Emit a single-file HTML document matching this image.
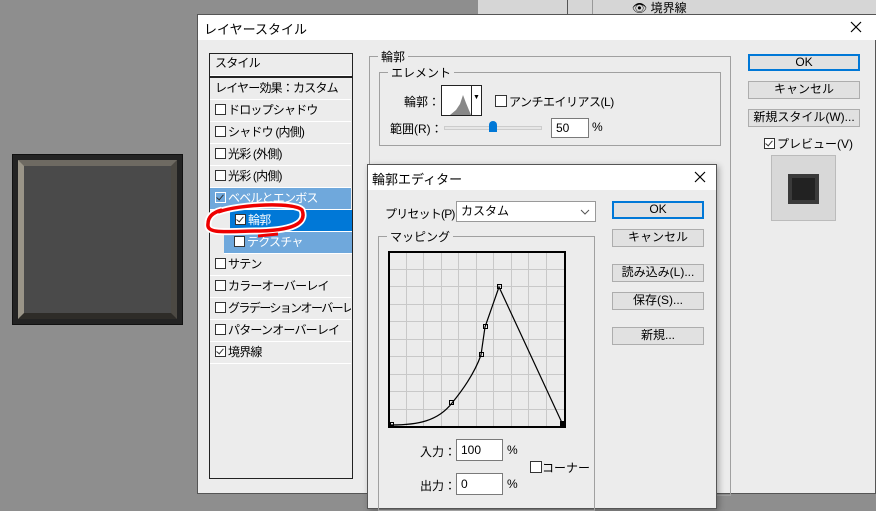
<!DOCTYPE html>
<html><head><meta charset="utf-8"><style>
*{box-sizing:border-box;margin:0;padding:0}
body{width:876px;height:507px;overflow:hidden;position:relative;background:#8e8e8e;font-family:"Liberation Sans","Noto Sans CJK JP",sans-serif;font-size:12px;color:#000}
.a{position:absolute;white-space:nowrap}
.btn{position:absolute;background:#e1e1e1;border:1px solid #adadad;text-align:center;font-size:12px;line-height:15px;white-space:nowrap}
.btn.def{border:2px solid #0078d7;line-height:13px}
.cb{display:inline-block;width:11px;height:11px;border:1px solid #333;background:#fff;vertical-align:-1px;margin-right:2px;position:relative}
.cb.on::after{content:"";position:absolute;left:2px;top:0px;width:3px;height:6px;border:solid #333;border-width:0 1.5px 1.5px 0;transform:rotate(40deg)}
.row{position:absolute;left:0;width:141px;height:22px;border-bottom:1px solid #fff;line-height:21px;padding-left:5px;font-size:12px;letter-spacing:-0.8px;white-space:nowrap;overflow:hidden}
.inp{position:absolute;background:#fff;border:1px solid #7a7a7a;padding-left:4px;font-size:12px;line-height:18px;white-space:nowrap}
.grp{position:absolute;border:1px solid #a0a0a0}
.grp span{position:absolute;top:-9px;left:8px;background:#ececec;padding:0 3px;font-size:12px;white-space:nowrap}
.x{position:absolute}
</style></head><body>
<div class="a" style="left:478px;top:0;width:398px;height:14px;background:#d6d6d6"></div>
<div class="a" style="left:567px;top:0;width:1px;height:14px;background:#555"></div>
<div class="a" style="left:592px;top:0;width:1px;height:14px;background:#999"></div>
<div class="a" style="left:632px;top:-1px;font-size:12px">👁 境界線</div>
<!-- left image -->
<div class="a" style="left:12px;top:154px;width:171px;height:171px;background:#232323;border:1px solid #111"></div>
<div class="a" style="left:18px;top:160px;width:159px;height:159px;background:#4a4a4a;border-style:solid;border-width:6px;border-color:#6e6a62 #4c4943 #2e2c28 #9a9588"></div>
<!-- main dialog -->
<div class="a" style="left:197px;top:14px;width:679px;height:480px;background:#ececec;border:1px solid #555"></div>
<div class="a" style="left:198px;top:15px;width:678px;height:25px;background:#fff"></div>
<div class="a" style="left:204px;top:19px;font-size:13px">レイヤースタイル</div>
<svg class="x" style="left:850px;top:21px" width="12" height="12"><path d="M1 1L11 11M11 1L1 11" stroke="#000" stroke-width="1.2"/></svg>
<!-- list -->
<div class="a" style="left:209px;top:53px;width:144px;height:426px;background:#ececec;border:1px solid #222">
<div class="row" style="top:0;height:22px;line-height:18px">スタイル</div>
<div class="a" style="left:0;top:22px;width:142px;height:2px;background:#222"></div>
<div class="row" style="top:24px">レイヤー効果：カスタム</div>
<div class="row" style="top:46px"><span class="cb"></span>ドロップシャドウ</div>
<div class="row" style="top:68px"><span class="cb"></span>シャドウ (内側)</div>
<div class="row" style="top:90px"><span class="cb"></span>光彩 (外側)</div>
<div class="row" style="top:112px"><span class="cb"></span>光彩 (内側)</div>
<div class="row" style="top:134px;background:#6fa8dc;color:#fff"><span class="cb on" style="background:#6fa8dc;border-color:#fff"></span>ベベルとエンボス</div>
<div class="row" style="top:156px;left:20px;width:122px;background:#0078d7;color:#fff"><span class="cb on"></span>輪郭</div>
<div class="row" style="top:178px;left:14px;width:128px;background:#6fa8dc;color:#fff;padding-left:10px"><span class="cb"></span>テクスチャ</div>
<div class="row" style="top:200px"><span class="cb"></span>サテン</div>
<div class="row" style="top:222px"><span class="cb"></span>カラーオーバーレイ</div>
<div class="row" style="top:244px;letter-spacing:-1.6px"><span class="cb"></span>グラデーションオーバーレイ</div>
<div class="row" style="top:266px"><span class="cb"></span>パターンオーバーレイ</div>
<div class="row" style="top:288px"><span class="cb on"></span>境界線</div>
</div>
<!-- red circle -->
<svg class="a" style="left:200px;top:200px" width="110" height="45"><path d="M18 12 C40 4,95 2,102 10 C106 20,100 30,60 31 C30 31,6 35,8 24 C8 16,14 12,22 10" fill="none" stroke="#fff" stroke-width="7"/><path d="M18 12 C40 4,95 2,102 10 C106 20,100 30,60 31 C30 31,6 35,8 24 C8 16,14 12,22 10" fill="none" stroke="#e00" stroke-width="3.5"/><path d="M58 36 L78 34" stroke="#e00" stroke-width="3"/></svg>
<!-- groups -->
<div class="grp" style="left:369px;top:56px;width:362px;height:440px"><span>輪郭</span></div>
<div class="grp" style="left:379px;top:72px;width:342px;height:74px"><span>エレメント</span></div>
<div class="a" style="left:404px;top:93px">輪郭：</div>
<div class="a" style="left:441px;top:85px;width:41px;height:31px;border:1px solid #222;background:#fff">
<svg width="39" height="29" style="position:absolute;left:0;top:0"><path d="M8 29 L14 24 L18 18 L21 9 L24 17 L29 29Z" fill="#888"/></svg>
<div class="a" style="left:29px;top:-1px;width:1px;height:31px;background:#222"></div>
<div class="a" style="left:31px;top:8px;font-size:7px">▼</div></div>
<div class="a" style="left:495px;top:93px;letter-spacing:-0.5px"><span class="cb" style="width:12px;height:12px"></span>アンチエイリアス(L)</div>
<div class="a" style="left:390px;top:120px">範囲(R)：</div>
<div class="a" style="left:444px;top:126px;width:98px;height:4px;background:#e6e6e6;border:1px solid #ccc"></div>
<div class="a" style="left:489px;top:121px;width:8px;height:11px;background:#0078d7;border-radius:4px 4px 0 0"></div>
<div class="inp" style="left:551px;top:118px;width:38px;height:20px">50</div>
<div class="a" style="left:592px;top:120px">%</div>
<!-- right buttons -->
<div class="btn def" style="left:748px;top:54px;width:112px;height:17px">OK</div>
<div class="btn" style="left:748px;top:81px;width:112px;height:18px">キャンセル</div>
<div class="btn" style="left:748px;top:109px;width:112px;height:18px">新規スタイル(W)...</div>
<div class="a" style="left:764px;top:135px"><span class="cb on"></span>プレビュー(V)</div>
<div class="a" style="left:771px;top:155px;width:65px;height:66px;background:#d8d8d8;border:1px solid #bbb"></div>
<div class="a" style="left:788px;top:174px;width:31px;height:30px;background:#222;border:4px solid #3a3a3a"></div>
<!-- sub dialog -->
<div class="a" style="left:367px;top:164px;width:350px;height:345px;background:#ececec;border:1px solid #555;box-shadow:2px 2px 6px rgba(0,0,0,.3)"></div>
<div class="a" style="left:368px;top:165px;width:348px;height:25px;background:#fff"></div>
<div class="a" style="left:372px;top:169px;font-size:13px">輪郭エディター</div>
<svg class="x" style="left:694px;top:171px" width="12" height="12"><path d="M1 1L11 11M11 1L1 11" stroke="#000" stroke-width="1.2"/></svg>
<div class="a" style="left:385px;top:205px;letter-spacing:-0.8px">プリセット(P)：</div>
<div class="inp" style="left:456px;top:201px;width:140px;height:21px;border-color:#999;font-size:12px">カスタム<svg style="position:absolute;right:5px;top:7px" width="10" height="6"><path d="M1 1L5 5L9 1" fill="none" stroke="#555"/></svg></div>
<div class="btn def" style="left:612px;top:201px;width:92px;height:18px">OK</div>
<div class="btn" style="left:612px;top:229px;width:92px;height:18px">キャンセル</div>
<div class="btn" style="left:612px;top:264px;width:92px;height:18px">読み込み(L)...</div>
<div class="btn" style="left:612px;top:292px;width:92px;height:18px">保存(S)...</div>
<div class="btn" style="left:612px;top:327px;width:92px;height:18px">新規...</div>
<div class="grp" style="left:378px;top:236px;width:217px;height:275px"><span>マッピング</span></div>
<svg class="a" style="left:388px;top:251px" width="179" height="178">
<rect x="1" y="1" width="176" height="175" fill="#ebebeb" stroke="#000" stroke-width="2"/>
<g stroke="#c8c8c8" stroke-width="1">
<path d="M18.5 2V175M35.5 2V175M53.5 2V175M70.5 2V175M88.5 2V175M105.5 2V175M123.5 2V175M140.5 2V175M158.5 2V175"/>
<path d="M2 18.5H176M2 35.5H176M2 53.5H176M2 70.5H176M2 88.5H176M2 105.5H176M2 123.5H176M2 140.5H176M2 158.5H176"/>
</g>
<path d="M3 174 C30 174,50 170,64 152 C78 135,88 118,93 104 L97 76 L111 36 L175 174" fill="none" stroke="#000" stroke-width="1.2"/>
<g fill="none" stroke="#000"><rect x="2.5" y="171.5" width="3" height="3"/><rect x="61.5" y="149.5" width="4" height="4"/><rect x="91.5" y="101.5" width="4" height="4"/><rect x="95.5" y="73.5" width="4" height="4"/><rect x="109.5" y="33.5" width="4" height="4"/></g>
<rect x="172" y="170" width="5" height="6" fill="#000"/>
</svg>
<div class="a" style="left:420px;top:443px">入力：</div>
<div class="inp" style="left:456px;top:439px;width:47px;height:22px;line-height:20px">100</div>
<div class="a" style="left:507px;top:443px">%</div>
<div class="a" style="left:530px;top:459px"><span class="cb" style="width:12px;height:12px;margin-right:0"></span>コーナー</div>
<div class="a" style="left:420px;top:477px">出力：</div>
<div class="inp" style="left:456px;top:473px;width:47px;height:22px;line-height:20px">0</div>
<div class="a" style="left:507px;top:477px">%</div>
</body></html>
